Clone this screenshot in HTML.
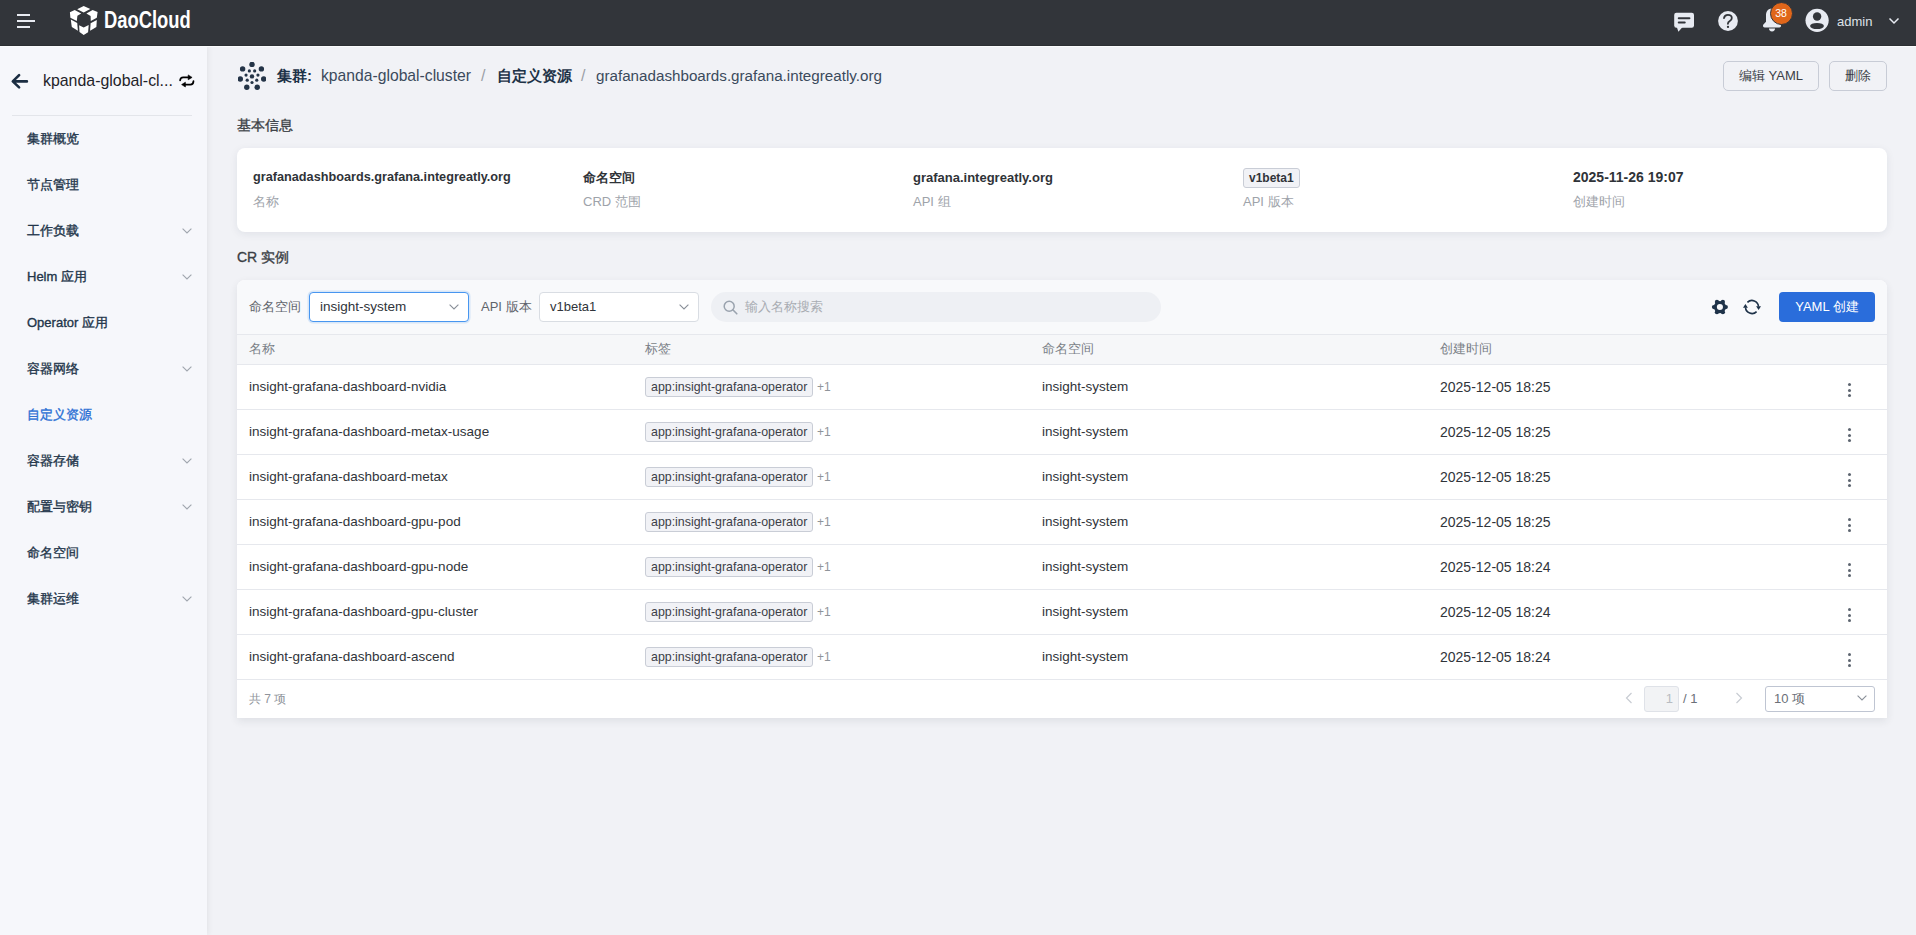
<!DOCTYPE html>
<html><head><meta charset="utf-8">
<style>
*{box-sizing:border-box;margin:0;padding:0}
html,body{width:1916px;height:935px;overflow:hidden}
body{background:#f1f2f6;font-family:"Liberation Sans",sans-serif;color:#2f3338;position:relative}
.abs{position:absolute}
svg{display:block}
#hdr{left:0;top:0;width:1916px;height:46px;background:#32353a;border-bottom:1px solid #2c2f33;z-index:3}
#hline{left:0;top:46px;width:1916px;height:1px;background:#fbfcfd;z-index:3}
#side{left:0;top:46px;width:207px;height:889px;background:#f6f7fb;box-shadow:1px 0 6px rgba(0,0,0,.07);z-index:2}
.mi{position:absolute;left:27px;font-size:13px;font-weight:400;-webkit-text-stroke:0.35px currentColor;color:#22354a;line-height:16px;white-space:nowrap}
.chev{position:absolute;left:182px;width:10px;height:6px}
.bc{font-size:16px;line-height:20px;white-space:nowrap}
.card{background:#fff;border-radius:8px;box-shadow:0 2px 8px rgba(30,40,60,.08)}
.val{position:absolute;font-size:13px;font-weight:bold;color:#2f3338;white-space:nowrap;line-height:16px}
.lab{position:absolute;font-size:13px;color:#9ea3aa;white-space:nowrap;line-height:16px}
.row{position:absolute;left:0;width:1650px;height:45px;border-top:1px solid #e6e8ed}
.cell{position:absolute;top:14px;font-size:13.5px;line-height:16px;color:#30343a;white-space:nowrap}
.tag{position:absolute;left:408px;top:12px;height:20px;width:168px;border:1px solid #c9cdd6;background:#f1f2f6;border-radius:3px;font-size:12.4px;line-height:18px;padding-left:5px;color:#3c4048;white-space:nowrap}
.plus{position:absolute;left:580px;top:14px;font-size:12px;color:#8f949a;line-height:16px}
.keb{position:absolute;left:1611px;top:18px;width:3px;height:14px}
.keb i{position:absolute;left:0;width:3px;height:3px;border-radius:50%;background:#5d6570}
</style></head>
<body>
<!-- HEADER -->
<div id="hdr" class="abs">
  <svg class="abs" style="left:16px;top:14px" width="20" height="14" viewBox="0 0 20 14"><rect x="1" y="0" width="13" height="2" fill="#e8ebf1"/><rect x="1" y="6" width="18" height="2" fill="#e8ebf1"/><rect x="1" y="12" width="13" height="2" fill="#e8ebf1"/></svg>
  <svg class="abs" style="left:66px;top:3px" width="36" height="36" viewBox="0 0 36 36"><g fill="#fff">
<path d="M11.2 6.2 L17.7 2.9 L24.3 6.0 L17.7 9.6 Z"/>
<path d="M3.9 9.2 L8.7 6.9 L15.2 10.4 L11.4 12.7 L10.8 18.1 L4.4 14.8 Z"/>
<path d="M20.4 10.4 L26.6 6.9 L31.6 9.1 L30.8 14.8 L24.8 18.1 L24.6 12.9 Z"/>
<path d="M4.8 16.6 L11.2 20.0 L11.9 27.7 L5.8 23.9 Z"/>
<path d="M30.8 16.9 L24.6 20.2 L24.1 27.7 L30.4 23.9 Z"/>
<path d="M13.1 22.3 L17.7 24.6 L22.7 21.9 L22.1 29.3 L17.7 32.0 L13.5 29.1 Z"/>
</g></svg>
  <div class="abs" style="left:104px;top:6px;font-size:24.5px;font-weight:bold;color:#fff;line-height:28px;transform:scaleX(0.75);transform-origin:0 0">DaoCloud</div>
  <!-- right icons -->
  <svg class="abs" style="left:1670px;top:8px" width="30" height="28" viewBox="0 0 30 28"><rect x="4.2" y="4.8" width="19.8" height="15" rx="2.2" fill="#e8ebf2"/><path d="M6.8 19 L8.4 23.8 L12.6 19 Z" fill="#e8ebf2"/><path d="M8.8 10.3 H19.4 M8.8 14.5 H14.7" stroke="#32353a" stroke-width="2.1" stroke-linecap="round"/></svg>
  <svg class="abs" style="left:1718px;top:11px" width="20" height="20" viewBox="0 0 20 20"><circle cx="10" cy="10" r="9.9" fill="#e8ebf2"/><path d="M6 7.1 Q6.5 3.8 9.9 3.8 Q13.8 3.8 13.8 7 Q13.8 8.8 11.8 10 Q9.9 11.1 9.9 12.8" fill="none" stroke="#32353a" stroke-width="1.8" stroke-linecap="round"/><circle cx="10" cy="15.9" r="1.15" fill="#32353a"/></svg>
  <svg class="abs" style="left:1758px;top:0px" width="40" height="40" viewBox="0 0 40 40"><path d="M14 8.5 C9 8.5 8 12.5 8 15.5 V21.8 L5.2 24.8 Q4.4 27.4 6.6 27.4 H21.4 Q23.6 27.4 22.8 24.8 L20 21.8 V15.5 C20 12.5 19 8.5 14 8.5 Z" fill="#e8ebf2"/><path d="M11 28.6 H17 Q17 31.4 14 31.4 Q11 31.4 11 28.6 Z" fill="#e8ebf2"/></svg>
  <div class="abs" style="left:1769.6px;top:2px;width:23px;height:23px;border-radius:50%;background:#e0661a;border:1.5px solid #32353a;color:#fff;font-size:10.5px;line-height:20px;text-align:center">38</div>
  <svg class="abs" style="left:1800px;top:4px" width="34" height="34" viewBox="0 0 34 34"><circle cx="17.1" cy="16.35" r="11.6" fill="#e8ebf2"/><circle cx="17.1" cy="12.45" r="4.2" fill="#32353a"/><ellipse cx="17" cy="22" rx="6.9" ry="3.1" fill="#32353a"/></svg>
  <div class="abs" style="left:1837px;top:14px;font-size:13px;line-height:16px;color:#dfe2e8">admin</div>
  <svg class="abs" style="left:1888px;top:17px" width="12" height="8" viewBox="0 0 12 8"><path d="M1.5 1.5 L6 6 L10.5 1.5" fill="none" stroke="#e8ebf2" stroke-width="1.5"/></svg>
</div>

<div id="hline" class="abs"></div>
<!-- SIDEBAR -->
<div id="side" class="abs">
  <svg class="abs" style="left:6px;top:24px" width="28" height="22" viewBox="0 0 28 22"><path d="M20.9 11.4 H7.5 M13.1 5.1 L6.8 11.4 L13.1 17.4" fill="none" stroke="#1b2d42" stroke-width="2.6" stroke-linecap="round" stroke-linejoin="round"/></svg>
  <div class="abs" style="left:43px;top:26px;font-size:15.9px;line-height:18px;color:#1f2329;white-space:nowrap">kpanda-global-cl...</div>
  <svg class="abs" style="left:174px;top:24px" width="26" height="22" viewBox="0 0 26 22"><path d="M6.1 10.4 Q6.3 7.4 9.2 7.4 H15 M19.5 11.1 Q19.3 14.6 16.4 14.6 H10.8" fill="none" stroke="#000" stroke-width="1.7" stroke-linecap="round"/><path d="M14.2 4.9 L18.1 7.4 L14.2 9.8 Z M11.4 12.2 L7.6 14.6 L11.4 17 Z" fill="#000" stroke="#000" stroke-width="0.6" stroke-linejoin="round"/></svg>
  <div class="abs" style="left:12px;top:69px;width:180px;height:1px;background:#e3e5ea"></div>
  <div class="mi" style="top:85px">集群概览</div>
  <div class="mi" style="top:131px">节点管理</div>
  <div class="mi" style="top:177px">工作负载</div>
  <div class="mi" style="top:223px">Helm 应用</div>
  <div class="mi" style="top:269px">Operator 应用</div>
  <div class="mi" style="top:315px">容器网络</div>
  <div class="mi" style="top:361px;color:#2a6fd4">自定义资源</div>
  <div class="mi" style="top:407px">容器存储</div>
  <div class="mi" style="top:453px">配置与密钥</div>
  <div class="mi" style="top:499px">命名空间</div>
  <div class="mi" style="top:545px">集群运维</div>
  <svg class="chev" style="top:182px" viewBox="0 0 10 6"><path d="M0.6 0.6 L5 5 L9.4 0.6" fill="none" stroke="#a0a6ae" stroke-width="1.1"/></svg>
  <svg class="chev" style="top:228px" viewBox="0 0 10 6"><path d="M0.6 0.6 L5 5 L9.4 0.6" fill="none" stroke="#a0a6ae" stroke-width="1.1"/></svg>
  <svg class="chev" style="top:320px" viewBox="0 0 10 6"><path d="M0.6 0.6 L5 5 L9.4 0.6" fill="none" stroke="#a0a6ae" stroke-width="1.1"/></svg>
  <svg class="chev" style="top:412px" viewBox="0 0 10 6"><path d="M0.6 0.6 L5 5 L9.4 0.6" fill="none" stroke="#a0a6ae" stroke-width="1.1"/></svg>
  <svg class="chev" style="top:458px" viewBox="0 0 10 6"><path d="M0.6 0.6 L5 5 L9.4 0.6" fill="none" stroke="#a0a6ae" stroke-width="1.1"/></svg>
  <svg class="chev" style="top:550px" viewBox="0 0 10 6"><path d="M0.6 0.6 L5 5 L9.4 0.6" fill="none" stroke="#a0a6ae" stroke-width="1.1"/></svg>
</div>

<!-- MAIN -->
<!-- breadcrumb -->
<svg class="abs" style="left:238px;top:62px" width="28" height="28" viewBox="0 0 28 28"><g fill="#243447"><circle cx="14.00" cy="2.40" r="2.7"/><circle cx="23.38" cy="6.92" r="2.7"/><circle cx="25.70" cy="17.07" r="2.7"/><circle cx="19.21" cy="25.21" r="2.7"/><circle cx="8.79" cy="25.21" r="2.7"/><circle cx="2.30" cy="17.07" r="2.7"/><circle cx="4.62" cy="6.92" r="2.7"/><circle cx="14.00" cy="20.50" r="1.6"/><circle cx="9.23" cy="18.20" r="1.6"/><circle cx="8.05" cy="13.04" r="1.6"/><circle cx="11.35" cy="8.90" r="1.6"/><circle cx="16.65" cy="8.90" r="1.6"/><circle cx="19.95" cy="13.04" r="1.6"/><circle cx="18.77" cy="18.20" r="1.6"/><circle cx="14" cy="14.4" r="2.2"/></g></svg>
<div class="abs bc" style="left:277px;top:66px;font-size:15px;font-weight:bold;color:#1d3247">集群:</div>
<div class="abs bc" style="left:321px;top:66px;font-size:15.7px;color:#3b4a5c">kpanda-global-cluster</div>
<div class="abs bc" style="left:481px;top:66px;color:#9a9fa6">/</div>
<div class="abs bc" style="left:497px;top:66px;font-size:15px;font-weight:bold;color:#1d3247">自定义资源</div>
<div class="abs bc" style="left:581px;top:66px;color:#9a9fa6">/</div>
<div class="abs bc" style="left:596px;top:66px;font-size:15.2px;color:#3b4a5c">grafanadashboards.grafana.integreatly.org</div>
<div class="abs" style="left:1723px;top:61px;width:96px;height:30px;border:1px solid #c8ccd6;border-radius:5px;font-size:13px;line-height:28px;text-align:center;color:#3b3f46">编辑 YAML</div>
<div class="abs" style="left:1829px;top:61px;width:58px;height:30px;border:1px solid #c8ccd6;border-radius:5px;font-size:13px;line-height:28px;text-align:center;color:#3b3f46">删除</div>

<!-- info -->
<div class="abs" style="left:237px;top:117px;font-size:14px;line-height:16px;-webkit-text-stroke:0.35px currentColor;color:#3b3f45">基本信息</div>
<div class="abs card" style="left:237px;top:148px;width:1650px;height:84px">
  <div class="val" style="left:16px;top:21px;font-size:12.7px">grafanadashboards.grafana.integreatly.org</div>
  <div class="lab" style="left:16px;top:46px">名称</div>
  <div class="val" style="left:346px;top:22px">命名空间</div>
  <div class="lab" style="left:346px;top:46px">CRD 范围</div>
  <div class="val" style="left:676px;top:22px">grafana.integreatly.org</div>
  <div class="lab" style="left:676px;top:46px">API 组</div>
  <div class="abs" style="left:1006px;top:20px;height:20px;padding:0 5px;border:1px solid #c9cdd6;background:#f1f2f6;border-radius:3px;font-size:12px;font-weight:bold;line-height:18px;color:#30343a">v1beta1</div>
  <div class="lab" style="left:1006px;top:46px">API 版本</div>
  <div class="val" style="left:1336px;top:21px;font-size:14px">2025-11-26 19:07</div>
  <div class="lab" style="left:1336px;top:46px">创建时间</div>
</div>
<div class="abs" style="left:237px;top:249px;font-size:14px;line-height:16px;-webkit-text-stroke:0.35px currentColor;color:#3b3f45">CR 实例</div>

<!-- table -->
<div class="abs card" style="left:237px;top:280px;width:1650px;height:438px;overflow:hidden;border-radius:8px 8px 0 0;box-shadow:0 3px 8px rgba(30,40,60,.09)">
  <div class="abs" style="left:0;top:0;width:1650px;height:55px;background:#f8f9fb;border-bottom:1px solid #e6e8ed"></div>
  <div class="abs" style="left:12px;top:19px;font-size:13px;line-height:16px;color:#5f646b">命名空间</div>
  <div class="abs" style="left:72px;top:12px;width:160px;height:30px;border:1px solid #4896f0;border-radius:4px;background:#fff;box-shadow:0 0 0 1.5px rgba(72,150,240,.18)">
    <div class="abs" style="left:10px;top:6px;font-size:13.5px;line-height:16px;color:#30343a">insight-system</div>
    <div class="abs" style="left:139px;top:11px"><svg width="10" height="6" viewBox="0 0 10 6"><path d="M0.6 0.6 L5 5 L9.4 0.6" fill="none" stroke="#8a9099" stroke-width="1.1"/></svg></div>
  </div>
  <div class="abs" style="left:244px;top:19px;font-size:13px;line-height:16px;color:#5f646b">API 版本</div>
  <div class="abs" style="left:302px;top:12px;width:160px;height:30px;border:1px solid #d9dde3;border-radius:4px;background:#fff">
    <div class="abs" style="left:10px;top:6px;font-size:13px;line-height:16px;color:#30343a">v1beta1</div>
    <div class="abs" style="left:139px;top:11px"><svg width="10" height="6" viewBox="0 0 10 6"><path d="M0.6 0.6 L5 5 L9.4 0.6" fill="none" stroke="#8a9099" stroke-width="1.1"/></svg></div>
  </div>
  <div class="abs" style="left:474px;top:12px;width:450px;height:30px;border-radius:15px;background:#eef0f4">
    <svg class="abs" style="left:12px;top:8px" width="15" height="15" viewBox="0 0 15 15"><circle cx="6.2" cy="6.2" r="5" fill="none" stroke="#9aa3ae" stroke-width="1.5"/><path d="M9.8 9.8 L13.8 13.8" stroke="#9aa3ae" stroke-width="1.6" stroke-linecap="round"/></svg>
    <div class="abs" style="left:34px;top:7px;font-size:13px;line-height:16px;color:#a8acb2">输入名称搜索</div>
  </div>
  <svg class="abs" style="left:1469px;top:14px" width="28" height="26" viewBox="0 0 28 26"><g fill="#1f3349"><circle cx="13.9" cy="13.07" r="6.1"/><circle cx="19.80" cy="13.07" r="2.15"/><circle cx="16.85" cy="18.18" r="2.15"/><circle cx="10.95" cy="18.18" r="2.15"/><circle cx="8.00" cy="13.07" r="2.15"/><circle cx="10.95" cy="7.96" r="2.15"/><circle cx="16.85" cy="7.96" r="2.15"/></g><circle cx="13.9" cy="13.07" r="3.05" fill="#f8f9fb"/></svg>
  <svg class="abs" style="left:1501px;top:14px" width="28" height="26" viewBox="0 0 28 26"><path d="M9.4 8.4 A6.5 6.5 0 0 1 20.5 12.6 M18.6 17.6 A6.5 6.5 0 0 1 7.5 13.4" fill="none" stroke="#1f3349" stroke-width="1.6"/><path d="M18.1 12.3 L23 12.3 L20.6 16 Z M5 13.7 L9.9 13.7 L7.4 10.1 Z" fill="#1f3349"/></svg>
  <div class="abs" style="left:1542px;top:12px;width:96px;height:30px;border-radius:4px;background:#2a6ddb;color:#fff;font-size:13px;line-height:30px;text-align:center">YAML 创建</div>
  <div class="abs" style="left:0;top:55px;width:1650px;height:29px;background:#f6f7f9"></div>
  <div class="abs" style="left:12px;top:61px;font-size:13px;line-height:16px;color:#7a7f87">名称</div>
  <div class="abs" style="left:408px;top:61px;font-size:13px;line-height:16px;color:#7a7f87">标签</div>
  <div class="abs" style="left:805px;top:61px;font-size:13px;line-height:16px;color:#7a7f87">命名空间</div>
  <div class="abs" style="left:1203px;top:61px;font-size:13px;line-height:16px;color:#7a7f87">创建时间</div>
  <div class="row" style="top:84px"><div class="cell" style="left:12px">insight-grafana-dashboard-nvidia</div><div class="tag">app:insight-grafana-operator</div><div class="plus">+1</div><div class="cell" style="left:805px">insight-system</div><div class="cell" style="left:1203px;font-size:14px">2025-12-05 18:25</div><div class="keb"><i style="top:0"></i><i style="top:5.5px"></i><i style="top:11px"></i></div></div>
  <div class="row" style="top:129px"><div class="cell" style="left:12px">insight-grafana-dashboard-metax-usage</div><div class="tag">app:insight-grafana-operator</div><div class="plus">+1</div><div class="cell" style="left:805px">insight-system</div><div class="cell" style="left:1203px;font-size:14px">2025-12-05 18:25</div><div class="keb"><i style="top:0"></i><i style="top:5.5px"></i><i style="top:11px"></i></div></div>
  <div class="row" style="top:174px"><div class="cell" style="left:12px">insight-grafana-dashboard-metax</div><div class="tag">app:insight-grafana-operator</div><div class="plus">+1</div><div class="cell" style="left:805px">insight-system</div><div class="cell" style="left:1203px;font-size:14px">2025-12-05 18:25</div><div class="keb"><i style="top:0"></i><i style="top:5.5px"></i><i style="top:11px"></i></div></div>
  <div class="row" style="top:219px"><div class="cell" style="left:12px">insight-grafana-dashboard-gpu-pod</div><div class="tag">app:insight-grafana-operator</div><div class="plus">+1</div><div class="cell" style="left:805px">insight-system</div><div class="cell" style="left:1203px;font-size:14px">2025-12-05 18:25</div><div class="keb"><i style="top:0"></i><i style="top:5.5px"></i><i style="top:11px"></i></div></div>
  <div class="row" style="top:264px"><div class="cell" style="left:12px">insight-grafana-dashboard-gpu-node</div><div class="tag">app:insight-grafana-operator</div><div class="plus">+1</div><div class="cell" style="left:805px">insight-system</div><div class="cell" style="left:1203px;font-size:14px">2025-12-05 18:24</div><div class="keb"><i style="top:0"></i><i style="top:5.5px"></i><i style="top:11px"></i></div></div>
  <div class="row" style="top:309px"><div class="cell" style="left:12px">insight-grafana-dashboard-gpu-cluster</div><div class="tag">app:insight-grafana-operator</div><div class="plus">+1</div><div class="cell" style="left:805px">insight-system</div><div class="cell" style="left:1203px;font-size:14px">2025-12-05 18:24</div><div class="keb"><i style="top:0"></i><i style="top:5.5px"></i><i style="top:11px"></i></div></div>
  <div class="row" style="top:354px"><div class="cell" style="left:12px">insight-grafana-dashboard-ascend</div><div class="tag">app:insight-grafana-operator</div><div class="plus">+1</div><div class="cell" style="left:805px">insight-system</div><div class="cell" style="left:1203px;font-size:14px">2025-12-05 18:24</div><div class="keb"><i style="top:0"></i><i style="top:5.5px"></i><i style="top:11px"></i></div></div>
  <div class="row" style="top:399px;height:39px"></div>
  <div class="abs" style="left:12px;top:411px;font-size:12px;line-height:16px;color:#8f949b">共 7 项</div>
  <svg class="abs" style="left:1388px;top:412px" width="8" height="12" viewBox="0 0 8 12"><path d="M6.5 1 L1.5 6 L6.5 11" fill="none" stroke="#c8ccd2" stroke-width="1.2"/></svg>
  <div class="abs" style="left:1407px;top:406px;width:35px;height:26px;border:1px solid #dfe2e8;border-radius:3px;background:#f2f3f5;font-size:13px;line-height:24px;text-align:right;padding-right:5px;color:#b8bcc2">1</div>
  <div class="abs" style="left:1446px;top:411px;font-size:13px;line-height:16px;color:#6b7078">/ 1</div>
  <svg class="abs" style="left:1498px;top:412px" width="8" height="12" viewBox="0 0 8 12"><path d="M1.5 1 L6.5 6 L1.5 11" fill="none" stroke="#c8ccd2" stroke-width="1.2"/></svg>
  <div class="abs" style="left:1528px;top:406px;width:110px;height:26px;border:1px solid #bfc5d2;border-radius:3px;background:#fff">
    <div class="abs" style="left:8px;top:4px;font-size:13px;line-height:16px;color:#6b7078">10 项</div>
    <div class="abs" style="left:91px;top:8px"><svg width="10" height="6" viewBox="0 0 10 6"><path d="M0.6 0.6 L5 5 L9.4 0.6" fill="none" stroke="#8a9099" stroke-width="1.1"/></svg></div>
  </div>
</div>

</body></html>
